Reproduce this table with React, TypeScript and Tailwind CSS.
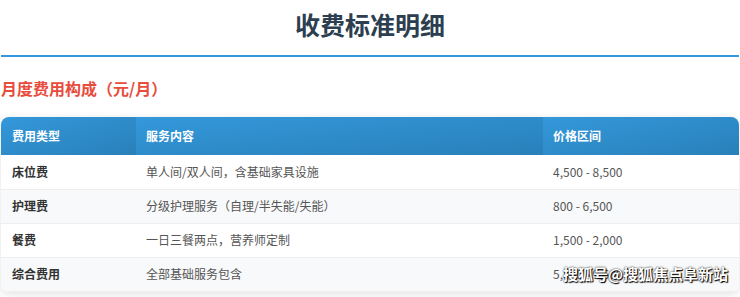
import React from 'react';

const rows = [
  { type: '床位费', desc: '单人间/双人间，含基础家具设施', price: '4,500 - 8,500' },
  { type: '护理费', desc: '分级护理服务（自理/半失能/失能）', price: '800 - 6,500' },
  { type: '餐费', desc: '一日三餐两点，营养师定制', price: '1,500 - 2,000' },
  { type: '综合费用', desc: '全部基础服务包含', price: '5,800 - 9,600' },
];

const font = { fontFamily: '"Noto Sans CJK SC", "Noto Sans", sans-serif' };

export default function App() {
  return (
    <div className="relative h-[297px] w-[740px] overflow-hidden bg-white" style={font}>
      <div className="pl-px pr-px">
        <h1 className="pt-[6px] text-center text-[25px] font-bold leading-[36px] text-[#2c3e50]">
          收费标准明细
        </h1>
        <div className="mt-[13px] h-[2px] w-full bg-[#3498db]" />

        <h2 className="mt-[20px] text-[16px] font-bold leading-[22px] text-[#e74c3c]">
          月度费用构成（元/月）
        </h2>

        <div className="mt-[18px] w-[738px] overflow-hidden rounded-lg shadow-[0_2px_10px_rgba(0,0,0,0.12)]">
          <table className="w-full border-collapse text-[12px]">
            <thead>
              <tr className="h-[38px] text-left text-white">
                <th className="w-[135px] bg-gradient-to-br from-[#3498db] to-[#2980b9] pl-[11px] font-bold">费用类型</th>
                <th className="w-[407px] bg-gradient-to-br from-[#3498db] to-[#2980b9] pl-[10px] font-bold">服务内容</th>
                <th className="bg-gradient-to-br from-[#3498db] to-[#2980b9] pl-[10px] font-bold">价格区间</th>
              </tr>
            </thead>
            <tbody>
              {rows.map((r, i) => (
                <tr
                  key={r.type}
                  className={
                    'h-[34px] border-b border-[#eeeeee] ' + (i % 2 === 1 ? 'bg-[#f8f9fa]' : 'bg-white')
                  }
                >
                  <td className="pl-[11px] font-bold text-[#333333]">{r.type}</td>
                  <td className="pl-[10px] text-[#555555]">{r.desc}</td>
                  <td className="pl-[10px] text-[#555555]">{r.price}</td>
                </tr>
              ))}
            </tbody>
          </table>
        </div>
      </div>

      <div
        className="absolute left-[563px] top-[264px] whitespace-nowrap text-[15px] font-bold leading-[20px] text-white"
        style={{ textShadow: '0 0 2px #000, 1px 1px 1px #000' }}
      >
        搜狐号@搜狐焦点阜新站
      </div>
    </div>
  );
}
